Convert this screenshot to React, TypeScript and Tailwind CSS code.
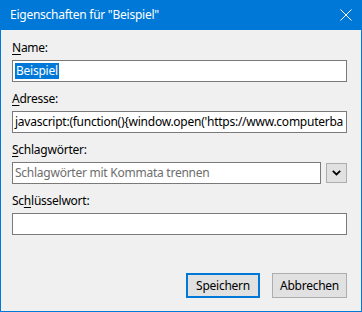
import React from 'react';

const font = { fontFamily: '"Noto Sans", "Open Sans", sans-serif' };

function Label({ pre, key_, post }: { pre?: string; key_: string; post: string }) {
  return (
    <div className="h-4 leading-4 text-[12px] text-black">
      {pre}
      <span className="underline underline-offset-2">{key_}</span>
      {post}
    </div>
  );
}

export default function App() {
  return (
    <div
      className="w-[362px] h-[312px] flex flex-col bg-[#f0f0f0] border-x border-b border-[#0078d7] tracking-[-0.25px]"
      style={font}
    >
      {/* title bar */}
      <div className="h-[30px] bg-[#0078d7] flex items-center justify-between pl-[10px] pr-[9px] text-white text-[12px] -mx-px">
        <span>Eigenschaften für "Beispiel"</span>
        <svg width="12" height="12" viewBox="0 0 12 12" className="mr-[1px]">
          <path d="M0.5 0.5 L11.5 11.5 M11.5 0.5 L0.5 11.5" stroke="#fff" strokeWidth="1" />
        </svg>
      </div>

      <div className="flex flex-col pl-[11px] pt-[10px]">
        {/* Name */}
        <Label key_="N" post="ame:" />
        <div className="mt-1 h-[22px] w-[335px] bg-white border border-[#7a7a7a] flex items-center pl-[2px] text-[12px]">
          <span className="bg-[#0078d7] text-white leading-4 px-px">Beispiel</span>
        </div>

        {/* Adresse */}
        <div className="mt-[9px]">
          <Label key_="A" post="dresse:" />
        </div>
        <div className="mt-1 h-[22px] w-[335px] bg-white border border-[#7a7a7a] flex items-center pl-[2px] text-[12px] overflow-hidden whitespace-nowrap">
          javascript:(function(){'{'}window.open('https://www.computerba
        </div>

        {/* Schlagwörter */}
        <div className="mt-[9px]">
          <Label key_="S" post="chlagwörter:" />
        </div>
        <div className="mt-1 flex items-center gap-[5px]">
          <div className="h-[22px] w-[309px] bg-white border border-[#7a7a7a] flex items-center pl-[2px] text-[12px] text-[#6d6d6d] overflow-hidden whitespace-nowrap">
            Schlagwörter mit Kommata trennen
          </div>
          <div className="h-[20px] w-[21px] bg-[#e1e1e1] border border-[#adadad] flex items-center justify-center">
            <svg width="9" height="6" viewBox="0 0 9 6">
              <path d="M0.8 0.8 L4.5 4.5 L8.2 0.8" stroke="#000" strokeWidth="1.8" fill="none" />
            </svg>
          </div>
        </div>

        {/* Schlüsselwort */}
        <div className="mt-[9px]">
          <Label pre="Sc" key_="h" post="lüsselwort:" />
        </div>
        <div className="mt-1 h-[22px] w-[335px] bg-white border border-[#7a7a7a]" />

        {/* buttons */}
        <div className="mt-[38px] flex justify-end gap-[12px] w-[335px]">
          <button className="h-[25px] w-[74px] bg-[#e1e1e1] border-2 border-[#0078d7] text-[12px] text-black">
            Speichern
          </button>
          <button className="h-[25px] w-[75px] bg-[#e1e1e1] border border-[#adadad] text-[12px] text-black">
            Abbrechen
          </button>
        </div>
      </div>
    </div>
  );
}
